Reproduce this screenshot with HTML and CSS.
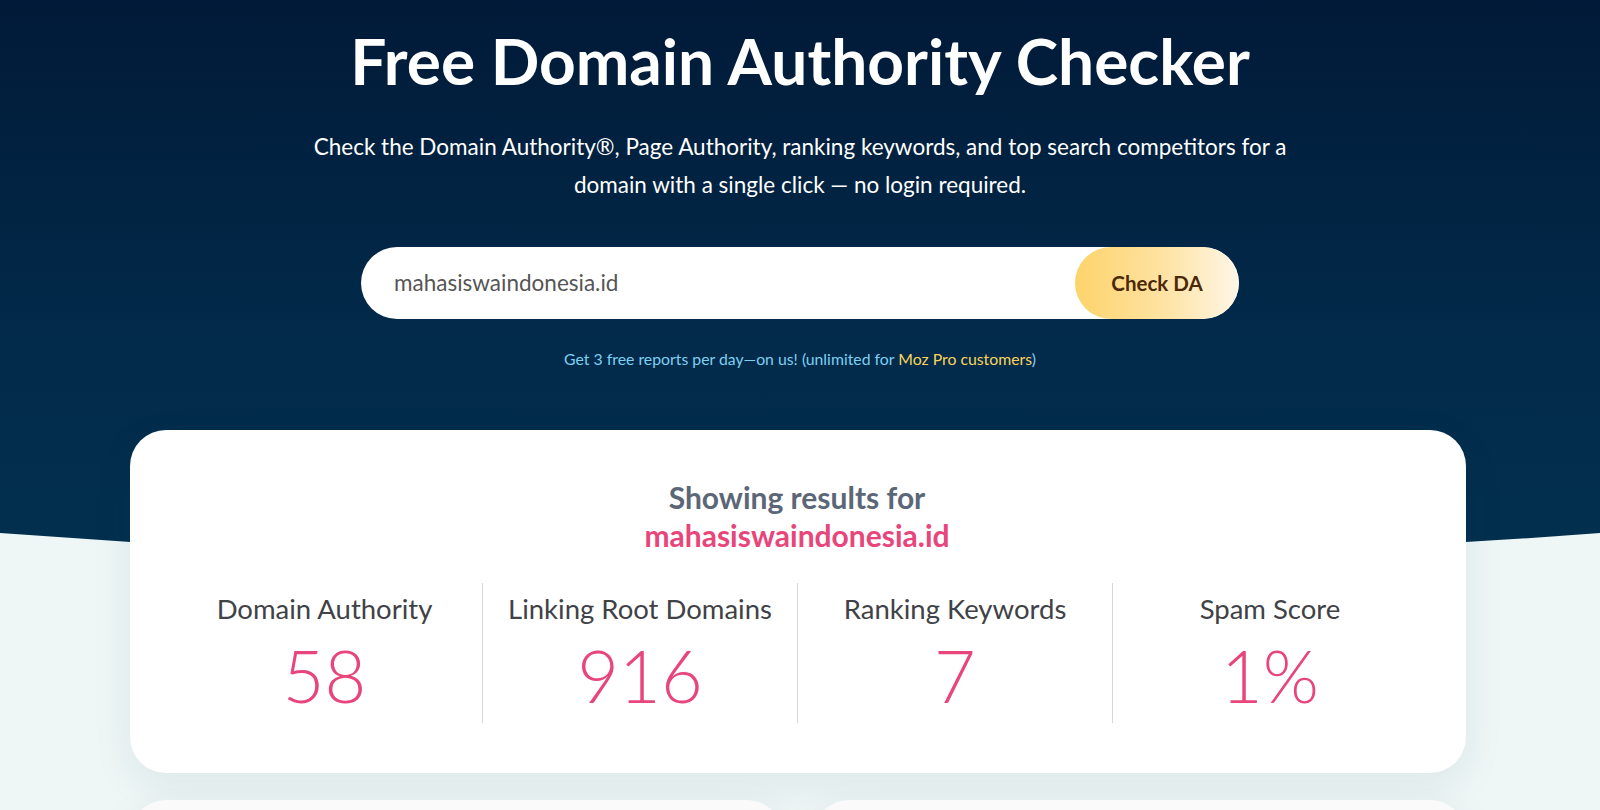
FILE: index.html
```html
<!DOCTYPE html>
<html lang="en">
<head>
<meta charset="utf-8">
<title>Free Domain Authority Checker</title>
<link rel="stylesheet" href="styles.css">
</head>
<body>
  <section class="hero">
    <h1 class="hero-title">Free Domain Authority Checker</h1>
    <p class="hero-lead">Check the Domain Authority®, Page Authority, ranking keywords, and top search competitors for a<br>domain with a single click — no login required.</p>
    <form class="search">
      <div class="search-field">mahasiswaindonesia.id</div>
      <button class="search-btn" type="button">Check DA</button>
    </form>
    <p class="hero-note">Get 3 free reports per day—on us! (unlimited for <span class="note-link">Moz Pro customers</span>)</p>
  </section>

  <main class="content">
    <div class="card results">
      <div class="results-head">
        <div class="results-for">Showing results for</div>
        <div class="results-domain">mahasiswaindonesia.id</div>
      </div>
      <div class="stats">
        <div class="stat">
          <div class="stat-label">Domain Authority</div>
          <div class="stat-value">58</div>
        </div>
        <div class="stat">
          <div class="stat-label">Linking Root Domains</div>
          <div class="stat-value">916</div>
        </div>
        <div class="stat">
          <div class="stat-label">Ranking Keywords</div>
          <div class="stat-value">7</div>
        </div>
        <div class="stat">
          <div class="stat-label">Spam Score</div>
          <div class="stat-value">1%</div>
        </div>
      </div>
    </div>
    <div class="subcards">
      <div class="card subcard"></div>
      <div class="card subcard"></div>
    </div>
  </main>
</body>
</html>
```

FILE: styles.css
```css
* { box-sizing: border-box; }

html, body {
  margin: 0;
  padding: 0;
}

body {
  font-family: Lato, "Open Sans", "Liberation Sans", sans-serif;
  background: #eef6f6;
  overflow: hidden;
  height: 810px;
}

.hero {
  height: 563px;
  padding-top: 23px;
  background: linear-gradient(180deg, #011a38 0%, #022a4a 60%, #03304f 100%);
  clip-path: path('M0 0 H1600 V533 Q800 593 0 533 Z');
  text-align: center;
  color: #fff;
}

.hero-title {
  margin: 0;
  font-size: 64px;
  line-height: 1.2;
  font-weight: 700;
}

.hero-lead {
  margin: 28px auto 0;
  font-size: 22.5px;
  line-height: 38px;
  font-weight: 400;
}

.search {
  margin: 43px auto 0;
  width: 878px;
  height: 72px;
  display: flex;
  background: #fff;
  border-radius: 36px;
  overflow: hidden;
}

.search-field {
  flex: 1;
  display: flex;
  align-items: center;
  padding-left: 33px;
  font-size: 22.5px;
  color: #555;
  text-align: left;
}

.search-btn {
  width: 164px;
  border: 0;
  border-radius: 36px;
  background: linear-gradient(90deg, #fdd36b 0%, #fee3a4 55%, #fff6e8 100%);
  font-family: inherit;
  font-size: 20.5px;
  font-weight: 700;
  color: #4a2808;
  padding: 0;
}

.hero-note {
  margin: 31px 0 0;
  font-size: 15.8px;
  line-height: 1.2;
  color: #7dd0f2;
}

.note-link {
  color: #fbd35c;
}

.content {
  margin-top: -133px;
  margin-left: 130px;
  position: relative;
  width: 1336px;
}

.card {
  background: #fff;
  border-radius: 36px;
  box-shadow: 0 12px 40px rgba(20, 60, 70, 0.08);
}

.results {
  height: 343px;
  padding: 48px 39px 0 37px;
}

.results-head {
  text-align: center;
  font-size: 30px;
  line-height: 38px;
  font-weight: 700;
}

.results-for {
  color: #5b6677;
}

.results-domain {
  color: #e8457b;
}

.stats {
  margin-top: 29px;
  display: grid;
  grid-template-columns: repeat(4, 1fr);
}

.stat {
  padding: 9px 0 12px;
  text-align: center;
  border-left: 1px solid #d6d6d6;
}

.stat:first-child {
  border-left: 0;
}

.stat-label {
  font-size: 27.5px;
  line-height: 1.2;
  color: #3f4246;
}

.stat-value {
  margin-top: 14px;
  font-size: 72px;
  line-height: 1;
  font-weight: 300;
  color: #e8457b;
}

.subcards {
  margin-top: 27px;
  display: grid;
  grid-template-columns: 1fr 1fr;
  gap: 30px;
}

.subcard {
  height: 200px;
  background: #fafafa;
}
```
